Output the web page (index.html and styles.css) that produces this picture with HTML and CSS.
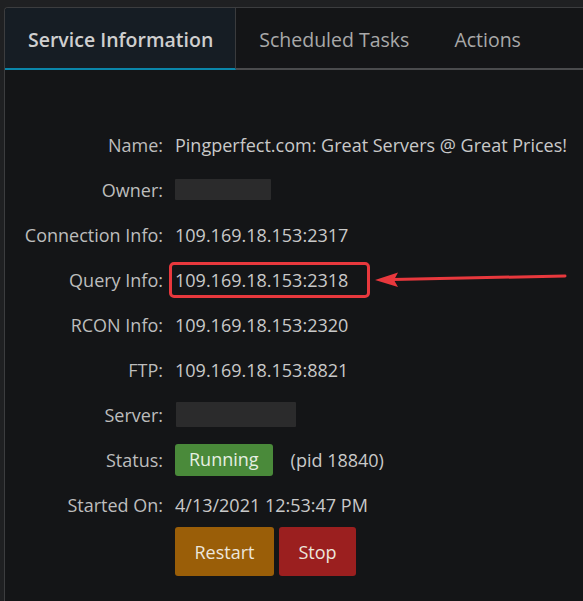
FILE: index.html
```html
<!DOCTYPE html>
<html lang="en">
<head>
<meta charset="UTF-8">
<meta name="viewport" content="width=device-width, initial-scale=1.0">
<title>Service Information</title>
<link rel="stylesheet" href="styles.css">
</head>
<body>

<div class="panel">
  <div class="tabs">
    <div class="tab active">Service Information</div>
    <div class="tab">Scheduled Tasks</div>
    <div class="tab">Actions</div>
  </div>

  <div class="info">
    <div class="label">Name:</div>
    <div class="value">Pingperfect.com: Great Servers @ Great Prices!</div>

    <div class="label">Owner:</div>
    <div class="value"><span class="blur owner"></span></div>

    <div class="label">Connection Info:</div>
    <div class="value">109.169.18.153:2317</div>

    <div class="label">Query Info:</div>
    <div class="value"><span class="mark">109.169.18.153:2318</span></div>

    <div class="label">RCON Info:</div>
    <div class="value">109.169.18.153:2320</div>

    <div class="label">FTP:</div>
    <div class="value">109.169.18.153:8821</div>

    <div class="label">Server:</div>
    <div class="value"><span class="blur server"></span></div>

    <div class="label">Status:</div>
    <div class="value"><span class="badge">Running</span><span class="pid">(pid 18840)</span></div>

    <div class="label">Started On:</div>
    <div class="value">4/13/2021 12:53:47 PM</div>

    <div class="label"></div>
    <div class="buttons">
      <button class="btn restart">Restart</button>
      <button class="btn stop">Stop</button>
    </div>
  </div>

  <!-- arrow pointing to the query info -->
  <svg class="arrow" width="200" height="20" viewBox="0 0 200 20">
    <line x1="192" y1="6" x2="20" y2="9.5" stroke="#e8383d" stroke-width="3" stroke-linecap="round"/>
    <polygon points="2,10 25,2.5 21,10 25,17" fill="#e8383d"/>
  </svg>
</div>

</body>
</html>
```

FILE: styles.css
```css
body {
  margin: 0;
  background-color: #1f2022;
  font-family: "Open Sans", "Liberation Sans", sans-serif;
  color: #c4c4c4;
  height: 601px;
  overflow: hidden;
}

.panel {
  position: relative;
  margin: 7px 0 0 4px;
  height: 600px;
  background-color: #141517;
  border-top: 1px solid #3c3d3f;
  border-left: 1px solid #3c3d3f;
  border-top-left-radius: 4px;
}

.tabs {
  display: flex;
  height: 60px;
  border-bottom: 2px solid #4a4b4d;
}

.tab {
  display: flex;
  align-items: center;
  padding: 3px 22px 0 23px;
  font-size: 19.5px;
  color: #a9a9a9;
}

.tab.active {
  background-color: #161d24;
  color: #cfcfcf;
  font-weight: 600;
  border-right: 1px solid #3a3b3d;
  border-bottom: 2px solid #0a86aa;
  margin-bottom: -2px;
  border-top-left-radius: 3px;
}

.info {
  display: grid;
  grid-template-columns: 158px auto;
  grid-auto-rows: 45px;
  column-gap: 12px;
  padding-top: 52px;
  font-size: 18px;
}

.label {
  display: flex;
  align-items: center;
  justify-content: flex-end;
  color: #bdbdbd;
}

.value {
  display: flex;
  align-items: center;
  color: #c9c9c9;
  white-space: nowrap;
}

.blur {
  display: inline-block;
  background-color: #2b2b2c;
  border-radius: 1px;
}

.blur.owner {
  width: 96px;
  height: 21px;
}

.blur.server {
  width: 120px;
  height: 25px;
  margin-left: 1px;
}

.mark {
  position: relative;
}

.mark::after {
  content: "";
  position: absolute;
  left: -6px;
  right: -22px;
  top: -6px;
  bottom: -6px;
  border: 3px solid #e8383d;
  border-radius: 5px;
}

.badge {
  background-color: #4a8a3a;
  color: #e6efe2;
  border-radius: 3px;
  padding: 3px 14px 5px;
}

.pid {
  margin-left: 18px;
}

.buttons {
  display: flex;
  gap: 5px;
  align-items: flex-start;
}

.btn {
  font-family: inherit;
  font-size: 18px;
  color: #ece6dc;
  border: none;
  border-radius: 3px;
  height: 49px;
  cursor: pointer;
}

.restart {
  width: 99px;
  background-color: #9a5e08;
}

.stop {
  width: 77px;
  background-color: #9b1f1f;
}

.arrow {
  position: absolute;
  left: 368px;
  top: 262px;
}
```
